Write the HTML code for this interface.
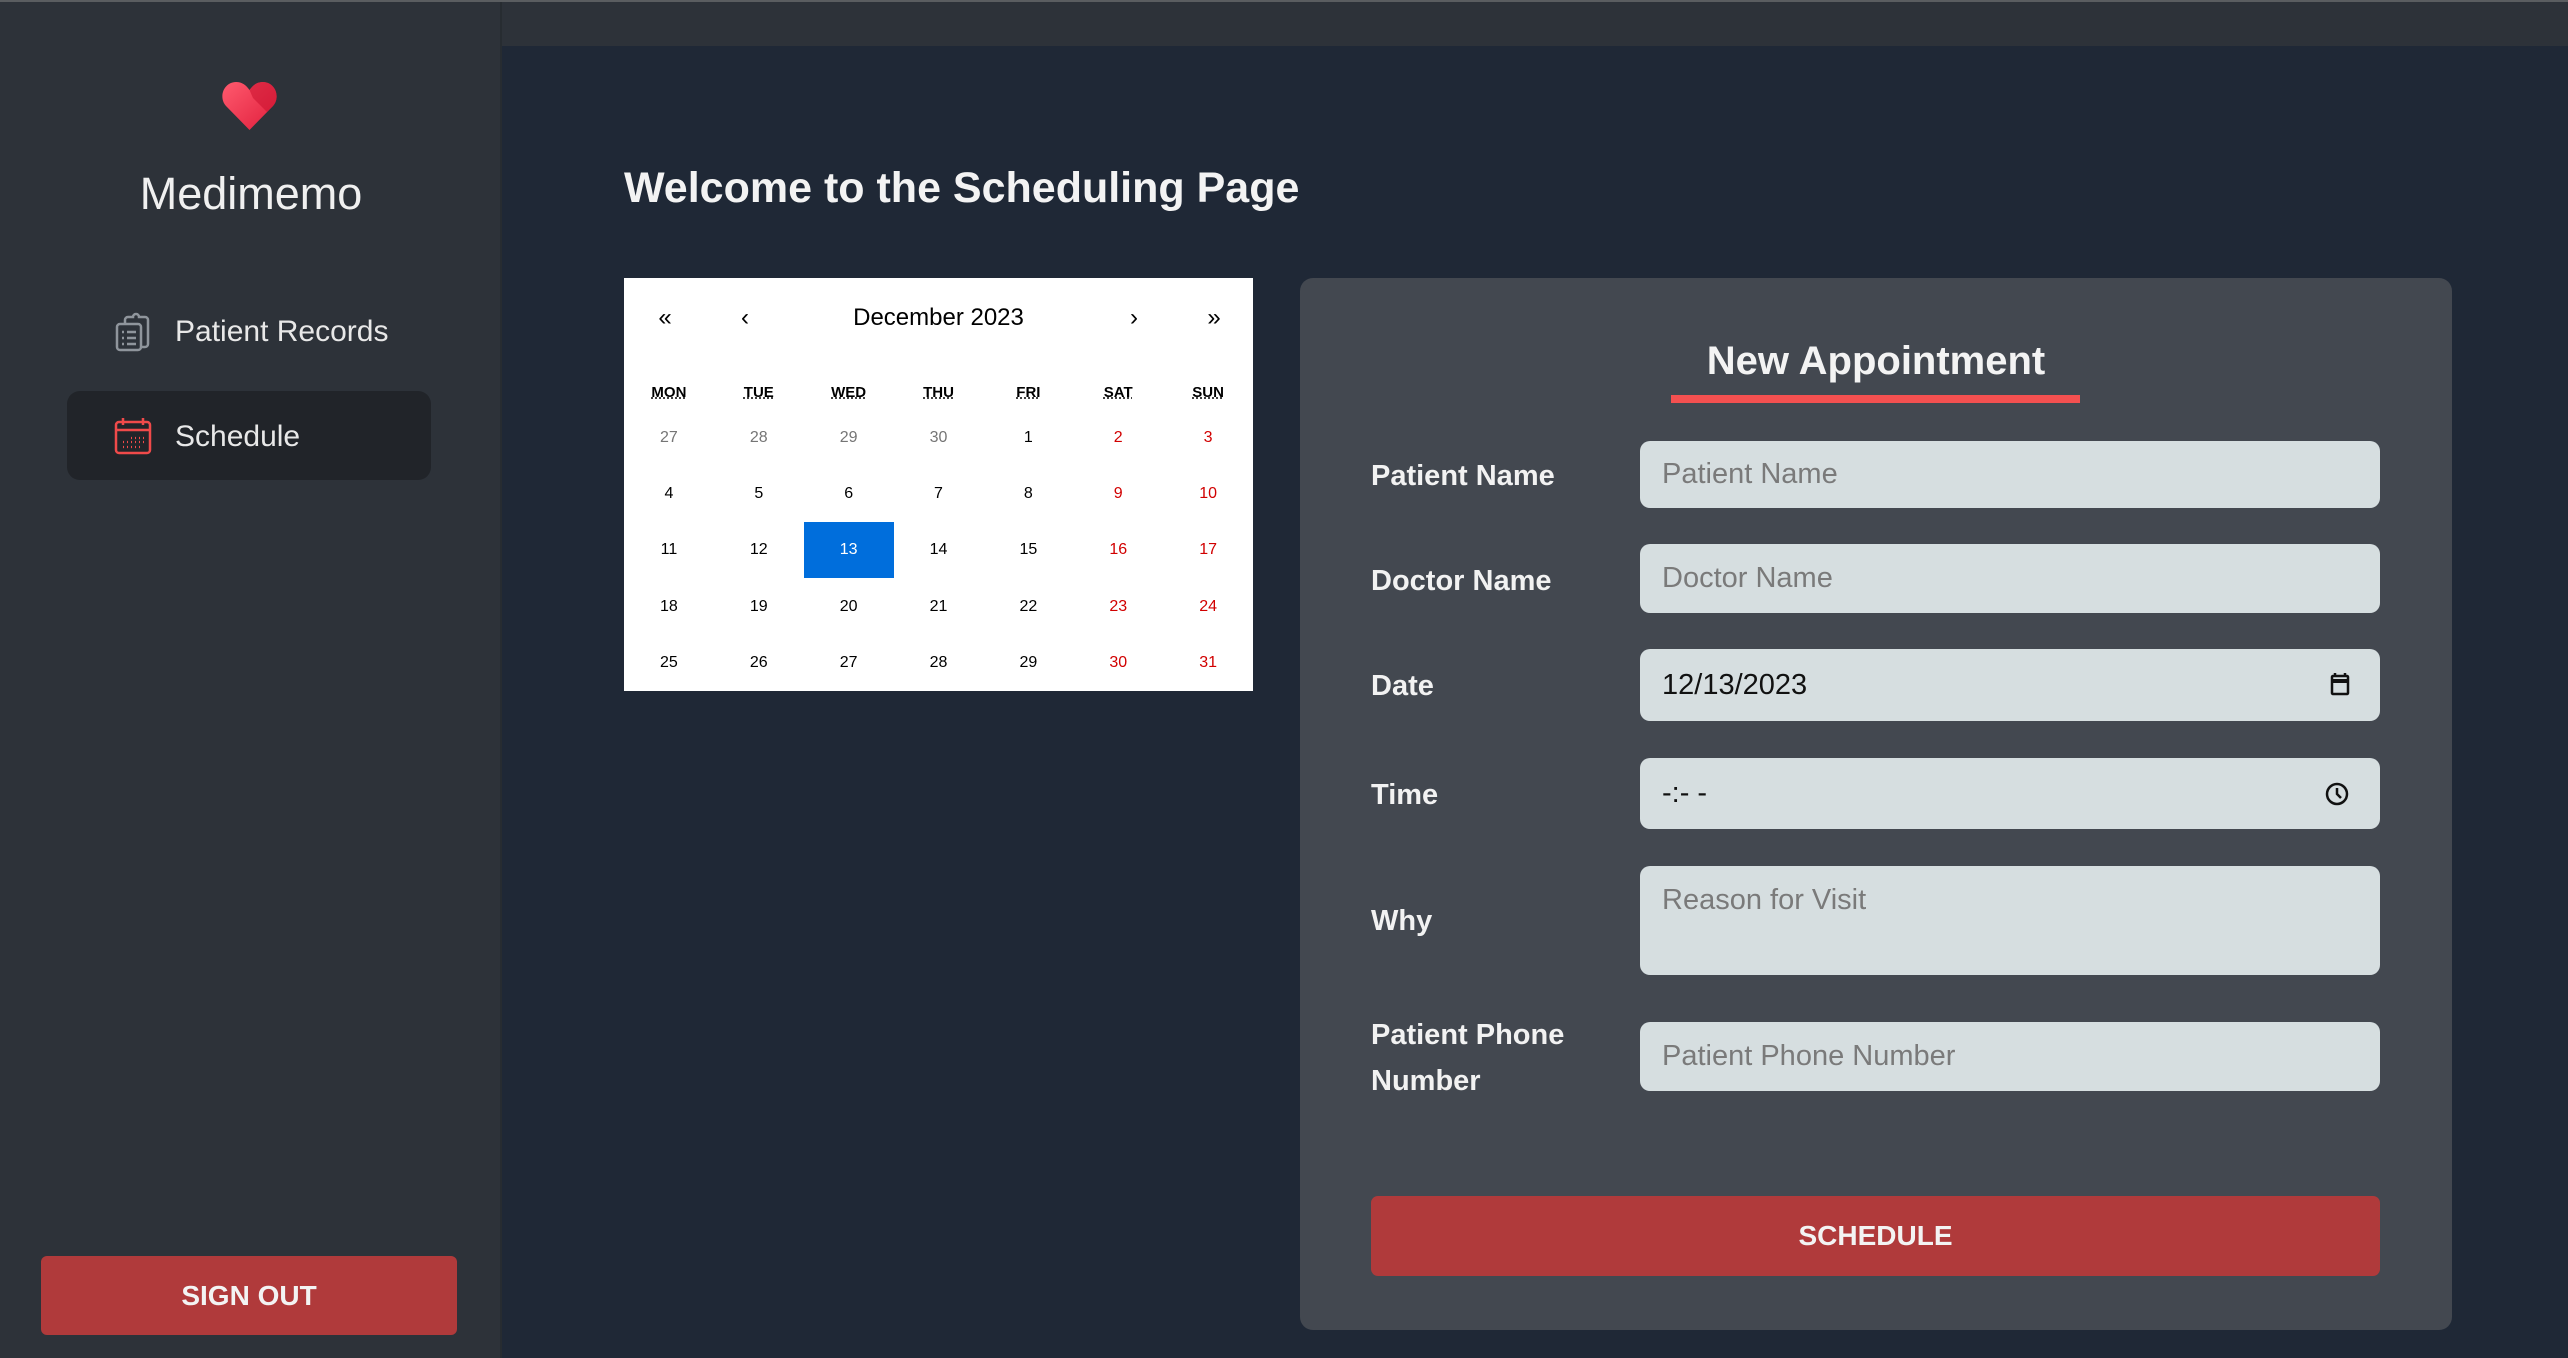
<!DOCTYPE html>
<html><head><meta charset="utf-8">
<style>
*{box-sizing:border-box;margin:0;padding:0}
body{width:2568px;height:1358px;background:#1f2836;font-family:"Liberation Sans",sans-serif;position:relative;overflow:hidden}
.abs{position:absolute}
#top{left:0;top:0;width:2568px;height:2px;background:#5a5d60}
#side{left:0;top:2px;width:502px;height:1356px;background:#2d3239;border-right:2px solid #272c31}
#hdr{left:502px;top:2px;width:2066px;height:44px;background:#2d3239}
.nav{color:#e8e8e8;font-size:30px}
.lbl{color:#f2f2f2;font-size:29px;font-weight:bold;left:1371px}
.inp{left:1640px;width:740px;background:#d6dee0;border-radius:10px;color:#7a7a7a;font-size:29px;padding-left:22px;display:flex;align-items:center}
.cal{left:624px;top:278px;width:629px;height:413px;background:#fff;font-size:16px;color:#000}
.row{position:absolute;left:0;width:629px;display:flex}
.row div{width:89.86px;text-align:center}
.g{color:#757575}.r{color:#d10000}
.wd div{font-weight:bold;font-size:15px;text-decoration:underline dotted}
.ar{position:absolute;top:26px;font-size:24px;width:40px;margin-left:-20px;text-align:center}
</style></head><body>
<div id="top" class="abs"></div>
<div id="side" class="abs"></div>
<div id="hdr" class="abs"></div>

<svg class="abs" style="left:221px;top:80px" width="57" height="52" viewBox="0 0 57 52">
<defs><linearGradient id="h" x1="0" y1="0" x2="1" y2="1"><stop offset="0" stop-color="#ff5a6e"/><stop offset="1" stop-color="#e01e3c"/></linearGradient></defs>
<path d="M28.5 50 L5 26 C-3 17 3 2 15 2 C21 2 25 5 28.5 10 C32 5 36 2 42 2 C54 2 60 17 52 26 Z" fill="url(#h)"/>
<path d="M28.5 10 C32 5 36 2 42 2 C54 2 60 17 52 26 L46 32 L32 18 Z" fill="#c8102e" opacity=".55"/>
</svg>
<div class="abs" style="left:0;width:502px;top:168px;text-align:center;color:#f0f0f0;font-size:45px">Medimemo</div>

<svg class="abs" style="left:115px;top:312px" width="36" height="40" viewBox="0 0 36 40" fill="none" stroke="#8f959c" stroke-width="2.5">
<rect x="2" y="12" width="24" height="26" rx="3"/><path d="M10 12 V8 a3 3 0 0 1 3-3 h5 a3 3 0 0 1 6 0 h6 a3 3 0 0 1 3 3 v24 a3 3 0 0 1-3 3 h-4"/>
<path d="M7 20h2M12 20h9M7 26h2M12 26h9M7 32h2M12 32h9"/></svg>
<div class="abs nav" style="left:175px;top:315px">Patient Records</div>
<div class="abs" style="left:67px;top:391px;width:364px;height:89px;background:#212429;border-radius:13px"></div>
<svg class="abs" style="left:114px;top:417px" width="38" height="38" viewBox="0 0 38 38" fill="none" stroke="#f04a4a" stroke-width="2.5">
<rect x="2" y="5" width="34" height="31" rx="3"/><path d="M2 13h34M9 1v7M29 1v7"/>
<path d="M9 25h1M13 25h1M17 25h1M21 25h1M25 25h1M29 25h1M9 30h1M13 30h1M17 30h1M21 30h1M25 30h1M17 21h1M21 21h1M25 21h1M29 21h1" stroke-width="2.2"/></svg>
<div class="abs nav" style="left:175px;top:420px">Schedule</div>
<div class="abs" style="left:41px;top:1256px;width:416px;height:79px;background:#b03a3b;border-radius:6px;color:#f3f3f3;font-weight:bold;font-size:28px;display:flex;align-items:center;justify-content:center">SIGN OUT</div>

<div class="abs" style="left:624px;top:164px;color:#f3f3f3;font-size:43px;font-weight:bold">Welcome to the Scheduling Page</div>

<div class="abs cal">
<div class="ar" style="left:41px">«</div><div class="ar" style="left:121px">‹</div>
<div class="row" style="top:26px;font-size:24px;justify-content:center"><div style="width:300px">December 2023</div></div>
<div class="ar" style="left:510px">›</div><div class="ar" style="left:590px">»</div>
<div class="row wd" style="top:106px"><div>MON</div><div>TUE</div><div>WED</div><div>THU</div><div>FRI</div><div>SAT</div><div>SUN</div></div>
<div class="row" style="top:151px"><div class="g">27</div><div class="g">28</div><div class="g">29</div><div class="g">30</div><div>1</div><div class="r">2</div><div class="r">3</div></div>
<div class="row" style="top:207px"><div>4</div><div>5</div><div>6</div><div>7</div><div>8</div><div class="r">9</div><div class="r">10</div></div>
<div class="abs" style="left:180px;top:244px;width:90px;height:56px;background:#006edc"></div>
<div class="row" style="top:263px"><div>11</div><div>12</div><div style="color:#fff">13</div><div>14</div><div>15</div><div class="r">16</div><div class="r">17</div></div>
<div class="row" style="top:320px"><div>18</div><div>19</div><div>20</div><div>21</div><div>22</div><div class="r">23</div><div class="r">24</div></div>
<div class="row" style="top:376px"><div>25</div><div>26</div><div>27</div><div>28</div><div>29</div><div class="r">30</div><div class="r">31</div></div>
</div>

<div class="abs" style="left:1300px;top:278px;width:1152px;height:1052px;background:#434850;border-radius:13px"></div>
<div class="abs" style="left:1300px;width:1152px;top:339px;text-align:center;color:#f3f3f3;font-size:40px;font-weight:bold">New Appointment</div>
<div class="abs" style="left:1671px;top:395px;width:409px;height:8px;background:#f45050"></div>

<div class="abs lbl" style="top:460px">Patient Name</div>
<div class="abs inp" style="top:441px;height:67px">Patient Name</div>
<div class="abs lbl" style="top:565px">Doctor Name</div>
<div class="abs inp" style="top:544px;height:69px">Doctor Name</div>
<div class="abs lbl" style="top:670px">Date</div>
<div class="abs inp" style="top:649px;height:72px;color:#111">12/13/2023</div>
<svg class="abs" style="left:2330px;top:672px" width="20" height="24" viewBox="0 0 20 24" fill="none" stroke="#111" stroke-width="2.5"><rect x="2" y="4" width="16" height="18" rx="1"/><path d="M2 9h16" stroke-width="4"/><path d="M5 1v4M15 1v4"/></svg>
<div class="abs lbl" style="top:779px">Time</div>
<div class="abs inp" style="top:758px;height:71px;color:#111">-:- -</div>
<svg class="abs" style="left:2325px;top:781px" width="24" height="26" viewBox="0 0 24 26" fill="none" stroke="#111" stroke-width="2.5"><circle cx="12" cy="13" r="10"/><path d="M12 7v6l4 4"/></svg>
<div class="abs lbl" style="top:905px">Why</div>
<div class="abs inp" style="top:866px;height:109px;align-items:flex-start;padding-top:18px">Reason for Visit</div>
<div class="abs lbl" style="top:1012px;line-height:46px">Patient Phone<br>Number</div>
<div class="abs inp" style="top:1022px;height:69px">Patient Phone Number</div>
<div class="abs" style="left:1371px;top:1196px;width:1009px;height:80px;background:#b03a3b;border-radius:7px;color:#f3f3f3;font-weight:bold;font-size:28px;display:flex;align-items:center;justify-content:center">SCHEDULE</div>
</body></html>
